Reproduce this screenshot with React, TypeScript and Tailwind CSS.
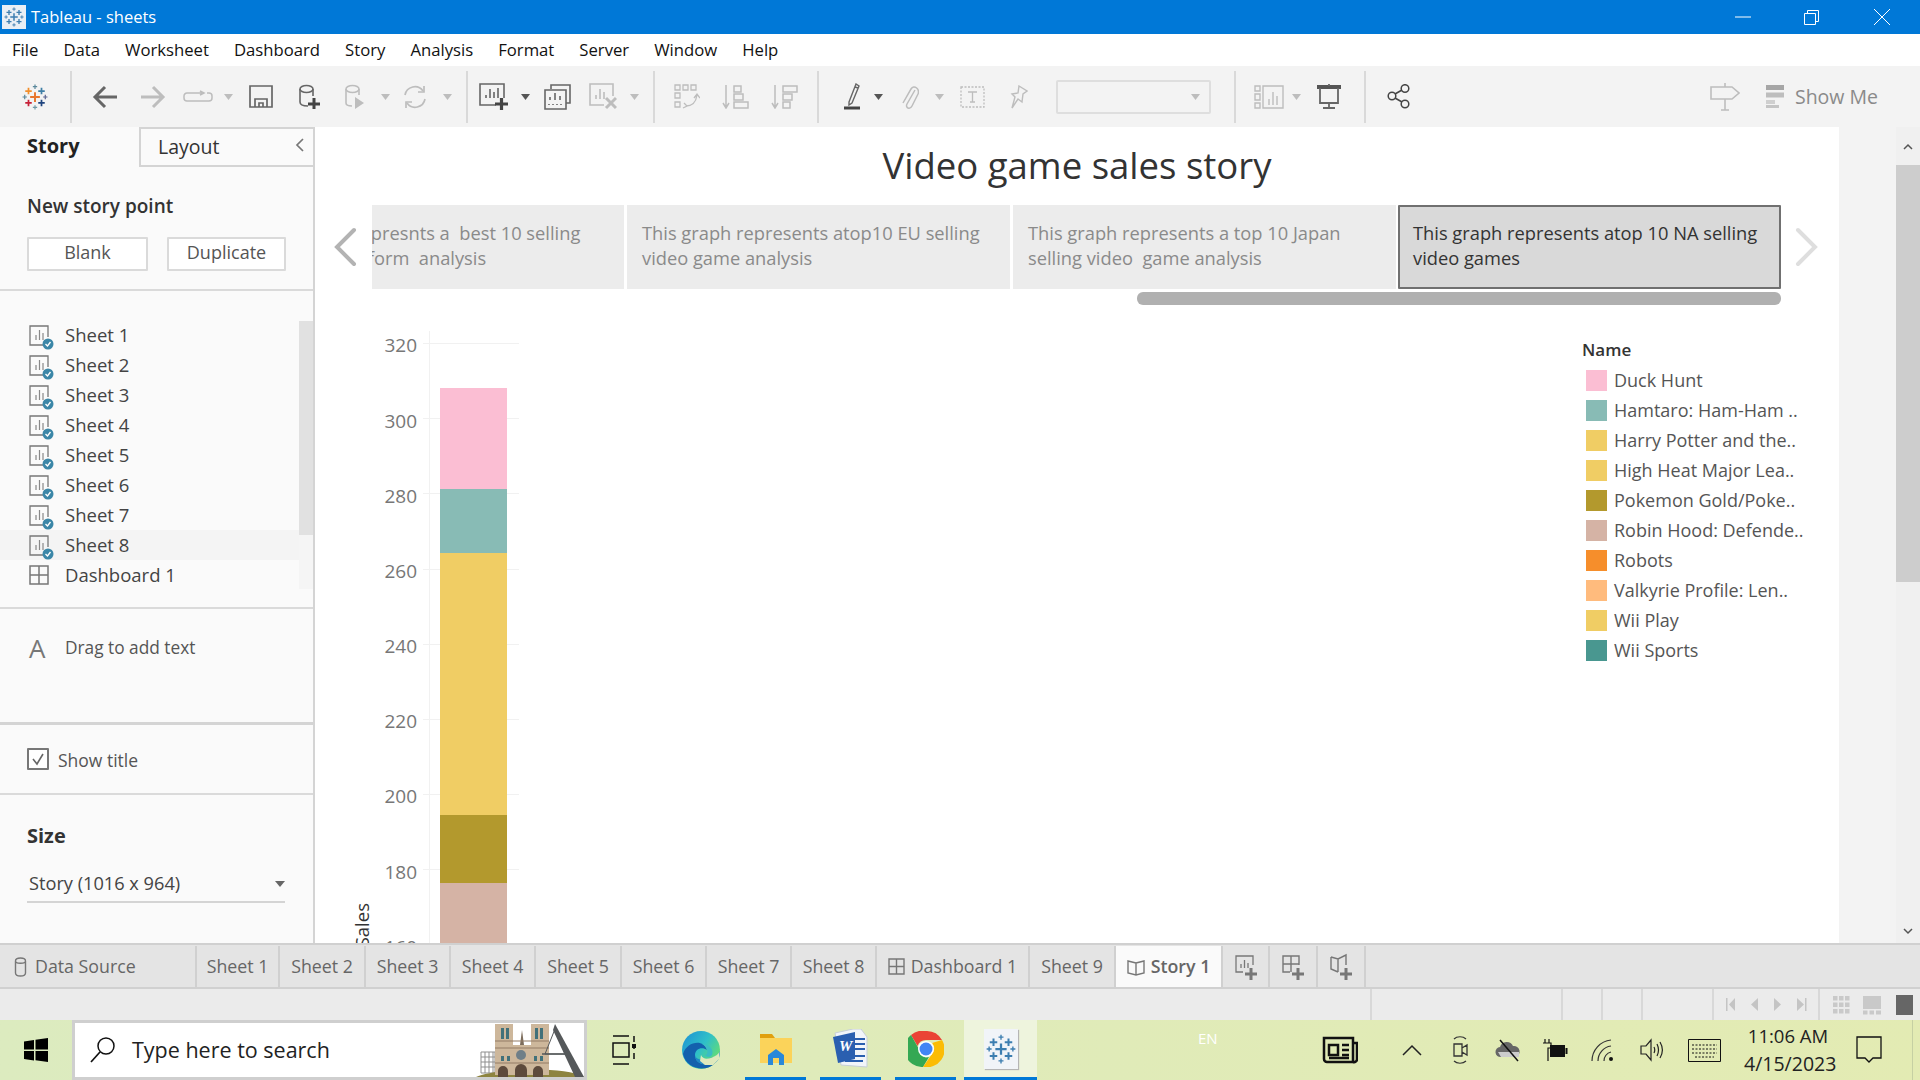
import type { ReactNode } from "react";

const legend = [
  ["Duck Hunt", "bg-[#fbbed3]"],
  ["Hamtaro: Ham-Ham ..", "bg-[#88bbb5]"],
  ["Harry Potter and the..", "bg-[#f0cd64]"],
  ["High Heat Major Lea..", "bg-[#f0cd64]"],
  ["Pokemon Gold/Poke..", "bg-[#b3992d]"],
  ["Robin Hood: Defende..", "bg-[#d5b3a5]"],
  ["Robots", "bg-[#f68e2b]"],
  ["Valkyrie Profile: Len..", "bg-[#ffbb7d]"],
  ["Wii Play", "bg-[#f0cd64]"],
  ["Wii Sports", "bg-[#499790]"],
];

const ticks = ["320", "300", "280", "260", "240", "220", "200", "180", "160"];
const sheets = ["Sheet 1", "Sheet 2", "Sheet 3", "Sheet 4", "Sheet 5", "Sheet 6", "Sheet 7", "Sheet 8"];

function Plus({ x, y, r, c, w = 1.6 }: { x: number; y: number; r: number; c: string; w?: number }) {
  return <path d={`M${x - r} ${y}H${x + r}M${x} ${y - r}V${y + r}`} stroke={c} strokeWidth={w} fill="none" />;
}

function TableauMark({ size, mono }: { size: number; mono?: string }) {
  const c = (v: string) => mono ?? v;
  return (
    <svg width={size} height={size} viewBox="0 0 24 24">
      <Plus x={12} y={12} r={4.5} c={c("#e8762d")} w={1.8} />
      <Plus x={6} y={6.5} r={3} c={c("#f28e2b")} />
      <Plus x={18} y={6.5} r={3} c={c("#3f7fa6")} />
      <Plus x={6} y={17.5} r={3} c={c("#c72037")} />
      <Plus x={18} y={17.5} r={3} c={c("#1f447e")} />
      <Plus x={12} y={2.5} r={2} c={c("#59879b")} w={1.1} />
      <Plus x={12} y={21.5} r={2} c={c("#7099a6")} w={1.1} />
      <Plus x={2.5} y={12} r={2} c={c("#5b879b")} w={1.1} />
      <Plus x={21.5} y={12} r={2} c={c("#5b6591")} w={1.1} />
    </svg>
  );
}

function Dd({ className, dark }: { className?: string; dark?: boolean }) {
  return (
    <svg width="9" height="6" viewBox="0 0 9 6" className={className}>
      <path d="M0 0H9L4.5 6Z" fill={dark ? "#555" : "#bdbdbd"} />
    </svg>
  );
}

function Ico({ w, h, className, children }: { w: number; h: number; className?: string; children: ReactNode }) {
  return (
    <svg width={w} height={h} viewBox={`0 0 ${w} ${h}`} fill="none" className={className}>
      {children}
    </svg>
  );
}

function Toolbar() {
  const dark = "#666";
  const light = "#bdbdbd";
  return (
    <div className="flex h-[61px] items-center bg-[#f3f3f3]">
      <div className="flex h-[52px] w-[72px] items-center justify-center border-r-2 border-[#d9d9d9]">
        <TableauMark size={26} />
      </div>
      <Ico w={26} h={24} className="ml-[20px]">
        <path d="M25 12H3M13 2L3 12L13 22" stroke={dark} strokeWidth="3" />
      </Ico>
      <Ico w={26} h={24} className="ml-[22px]">
        <path d="M1 12H23M13 2L23 12L13 22" stroke={light} strokeWidth="3" />
      </Ico>
      <Ico w={30} h={14} className="ml-[17px]">
        <path d="M20 3H4a3 3 0 0 0-3 3v2a3 3 0 0 0 3 3h22a3 3 0 0 0 3-3V6a3 3 0 0 0-3-3h-2M17 1l4 2-4 2" stroke={light} strokeWidth="1.5" />
      </Ico>
      <Dd className="ml-[11px]" />
      <Ico w={24} h={23} className="ml-[16px]">
        <path d="M1 1H23V22H1ZM6 22V14H18V22M10 22V18H14V22" stroke={dark} strokeWidth="1.7" />
      </Ico>
      <Ico w={23} h={25} className="ml-[25px]">
        <path d="M2 5V18C2 21 6 22 10 22M15 5V12" stroke={dark} strokeWidth="1.6" />
        <ellipse cx="8.5" cy="5" rx="6.5" ry="3.5" stroke={dark} strokeWidth="1.6" />
        <path d="M10 20H22M16 14V25" stroke="#444" strokeWidth="3" />
      </Ico>
      <Ico w={21} h={25} className="ml-[23px]">
        <path d="M2 5V19C2 21 5 22 8 22M15 5V11" stroke={light} strokeWidth="1.6" />
        <ellipse cx="8.5" cy="5" rx="6.5" ry="3.5" stroke={light} strokeWidth="1.6" />
        <path d="M11 13L20 19L11 25Z" fill={light} />
      </Ico>
      <Dd className="ml-[16px]" />
      <Ico w={26} h={26} className="ml-[12px]">
        <path d="M3 11A10 10 0 0 1 21 7M23 15A10 10 0 0 1 5 19" stroke={light} strokeWidth="1.7" />
        <path d="M22 2V8H16M4 24V18H10" stroke={light} strokeWidth="1.7" />
      </Ico>
      <Dd className="ml-[15px]" />
      <div className="ml-[14px] h-[52px] w-[2px] bg-[#d9d9d9]" />
      <Ico w={29} h={27} className="ml-[11px]">
        <path d="M17 22H1V1H25V15M7 15V12M11 15V6M15 15V9M19 15V5" stroke={dark} strokeWidth="1.6" />
        <path d="M16 21H29M22.500 15V27" stroke="#444" strokeWidth="3.200" />
      </Ico>
      <Dd dark className="ml-[13px]" />
      <Ico w={27} h={26} className="ml-[14px]">
        <path d="M7 5V1H26V19H22M1 6H22V25H1ZM6 16V13M11 16V9M16 16V12M5 21V20M9 21V20M13 21V20M17 21V20" stroke={dark} strokeWidth="1.600" />
      </Ico>
      <Ico w={28} h={27} className="ml-[18px]">
        <path d="M15 22H1V1H24V13M7 16V12M11 16V6M15 16V9" stroke={light} strokeWidth="1.6" />
        <path d="M17 15L27 25M27 15L17 25" stroke={light} strokeWidth="3" />
      </Ico>
      <Dd className="ml-[13px]" />
      <div className="ml-[14px] h-[52px] w-[2px] bg-[#d9d9d9]" />
      <Ico w={26} h={25} className="ml-[19px]">
        <path d="M1 1H6V6H1ZM9 1H14V6H9ZM17 1H22V6H17ZM1 9H6V14H1ZM1 18H6V23H1ZM12 22C18 22 22 18 23 11M20 14L23 10L26 14M9 24L13 22L10 19" stroke={light} strokeWidth="1.300" />
      </Ico>
      <Ico w={27} h={25} className="ml-[22px]">
        <path d="M4 1V23M1 19L4 24L7 19M12 2H19V8H12ZM12 10H21V16H12ZM12 18H26V24H12Z" stroke={light} strokeWidth="1.500" />
      </Ico>
      <Ico w={27} h={25} className="ml-[22px]">
        <path d="M4 1V23M1 19L4 24L7 19M12 2H26V8H12ZM12 10H21V16H12ZM12 18H19V24H12Z" stroke={light} strokeWidth="1.500" />
      </Ico>
      <div className="ml-[19px] h-[52px] w-[2px] bg-[#d9d9d9]" />
      <Ico w={18} h={27} className="ml-[25px]">
        <path d="M5 19L12 1L15 3L8 20L5 22ZM11 4L14 5" stroke={dark} strokeWidth="1.400" />
        <path d="M0 25H16" stroke="#444" strokeWidth="3" />
      </Ico>
      <Dd dark className="ml-[12px]" />
      <Ico w={18} h={26} className="ml-[18px]">
        <path d="M14 6L6 20C4 24 9 26 11 22L17 10C19 5 13 0 10 5L2 19" stroke={light} strokeWidth="1.500" />
      </Ico>
      <Dd className="ml-[16px]" />
      <Ico w={25} h={22} className="ml-[16px]">
        <path d="M1 1H24V21H1Z" stroke={light} strokeWidth="1.300" strokeDasharray="2 1.500" />
        <path d="M8 6H17M12.500 6V16M10 16H15" stroke={light} strokeWidth="1.300" />
      </Ico>
      <Ico w={18} h={24} className="ml-[25px]">
        <path d="M9 1L17 6L13 9L12 17L8 14L2 23L5 12L2 9L8 8Z" stroke={light} strokeWidth="1.400" />
      </Ico>
      <div className="ml-[28px] flex h-[34px] w-[155px] items-center justify-end rounded-[2px] border-2 border-[#dedede] pr-[9px]">
        <Dd />
      </div>
      <div className="ml-[23px] h-[52px] w-[2px] bg-[#d9d9d9]" />
      <Ico w={30} h={24} className="ml-[18px]">
        <path d="M1 1H6V6H1ZM1 9H6V15H1ZM1 18H6V23H1ZM9 1H29V23H9ZM15 20V14M19 20V7M23 20V11" stroke={light} strokeWidth="1.400" />
      </Ico>
      <Dd className="ml-[8px]" />
      <Ico w={26} h={25} className="ml-[15px]">
        <path d="M1 3H25" stroke="#555" strokeWidth="4" />
        <path d="M4 4V19H22V4M13 0V2M13 19V24M7 24H19" stroke={dark} strokeWidth="1.800" />
      </Ico>
      <div className="ml-[22px] h-[52px] w-[2px] bg-[#d9d9d9]" />
      <Ico w={24} h={25} className="ml-[21px]">
        <circle cx="5" cy="12" r="3.800" stroke="#444" strokeWidth="1.500" />
        <circle cx="18" cy="4.500" r="3.800" stroke="#444" strokeWidth="1.500" />
        <circle cx="18" cy="20" r="3.800" stroke="#444" strokeWidth="1.500" />
        <path d="M8 10L15 6M8 14L15 18" stroke="#444" strokeWidth="1.500" />
      </Ico>
      <div className="flex-1" />
      <Ico w={30} h={28} className="mr-[26px]">
        <path d="M1 4H22L29 10L22 16H1ZM15 0V4M15 16V27M11 27H19" stroke={light} strokeWidth="1.600" />
      </Ico>
      <div className="mr-[42px] flex items-center gap-[11px]">
        <Ico w={18} h={23}>
          <path d="M0 0H18V5H0Z" fill="#a6a6a6" />
          <path d="M0 7.500H18V12.500H0Z" fill="#bdbdbd" />
          <path d="M0 15H9V19H0Z" fill="#cfcfcf" />
          <path d="M0 20H13V23H0Z" fill="#c4c4c4" />
        </Ico>
        <span className="text-[19.5px] text-[#8a8a8a]">Show Me</span>
      </div>
    </div>
  );
}

function SheetIcon() {
  return (
    <svg width="26" height="25" viewBox="0 0 26 25" fill="none" className="mt-[5px] shrink-0">
      <path d="M14 20H1V1H19V12" stroke="#777" strokeWidth="1.300" />
      <path d="M7 15V10M10.500 15V5M14 15V8" stroke="#888" strokeWidth="1.200" />
      <circle cx="19" cy="19" r="5.500" fill="#3b87a8" />
      <path d="M16.500 19L18.500 21L21.500 17" stroke="white" strokeWidth="1.300" />
    </svg>
  );
}

function Sidebar() {
  return (
    <aside className="flex w-[315px] shrink-0 flex-col border-r-2 border-[#d4d4d4] bg-[#fafafa] text-[#444]">
      <div className="flex h-[40px] shrink-0">
        <div className="w-[139px] pl-[27px] pt-[3px] text-[20px] font-bold leading-[32px] text-[#222]">Story</div>
        <div className="flex flex-1 items-center justify-between border-y-2 border-l-2 border-[#d4d4d4] bg-[#fafafa] pl-[17px] pr-[8px] text-[19.5px] text-[#333]">
          <span>Layout</span>
          <svg width="10" height="16" viewBox="0 0 10 16" fill="none" className="-mt-[4px]">
            <path d="M8 2L2 8L8 14" stroke="#777" strokeWidth="1.700" />
          </svg>
        </div>
      </div>
      <div className="h-[124px] shrink-0 border-b-2 border-[#dadada] pl-[27px] pt-[25px]">
        <div className="text-[19px] font-semibold leading-[28px] text-[#333]">New story point</div>
        <div className="mt-[17px] flex gap-[19px]">
          <div className="flex h-[34px] w-[121px] items-center justify-center rounded-[1px] border-2 border-[#dadada] bg-white pb-[3px] text-[18px] text-[#555]">Blank</div>
          <div className="flex h-[34px] w-[119px] items-center justify-center rounded-[1px] border-2 border-[#dadada] bg-white pb-[3px] text-[18px] text-[#555]">Duplicate</div>
        </div>
      </div>
      <div className="relative h-[318px] shrink-0 border-b-2 border-[#dadada] pt-[29px]">
        {sheets.map((s) => (
          <div key={s} className={`flex h-[30px] items-center pl-[29px] text-[18.5px] ${s === "Sheet 8" ? "bg-[#f4f4f4]" : ""}`}>
            <SheetIcon />
            <span className="ml-[10px]">{s}</span>
          </div>
        ))}
        <div className="flex h-[30px] items-center pl-[29px] text-[18.5px]">
          <svg width="20" height="20" viewBox="0 0 20 20" fill="none">
            <path d="M1 1H19V19H1ZM10 1V19M1 10H19" stroke="#777" strokeWidth="1.500" />
          </svg>
          <span className="ml-[16px]">Dashboard 1</span>
        </div>
        <div className="absolute right-0 top-[30px] h-[268px] w-[14px] bg-[#f5f5f5]">
          <div className="h-[214px] bg-[#e1e1e1]" />
        </div>
      </div>
      <div className="flex h-[116px] shrink-0 items-start border-b-[3px] border-[#d4d4d4] pl-[29px] pt-[24px]">
        <span className="w-[36px] text-[26px] leading-[30px] text-[#777]">A</span>
        <span className="pt-[1px] text-[17.300px] leading-[28px] text-[#555]">Drag to add text</span>
      </div>
      <div className="flex h-[70px] shrink-0 items-center border-b-2 border-[#dadada] pl-[27px]">
        <div className="flex h-[22px] w-[22px] items-center justify-center rounded-[1px] border-2 border-[#777] bg-white">
          <svg width="14" height="14" viewBox="0 0 14 14" fill="none">
            <path d="M2 7L6 12L12 2" stroke="#666" strokeWidth="1.600" />
          </svg>
        </div>
        <span className="ml-[9px] pt-[2px] text-[17.500px] text-[#555]">Show title</span>
      </div>
      <div className="flex-1 pl-[27px] pr-[28px] pt-[27px]">
        <div className="text-[20px] font-bold leading-[28px] text-[#333]">Size</div>
        <div className="mt-[16px] flex h-[37px] items-center justify-between border-b-2 border-[#d4d4d4] pl-[2px] text-[18.200px] text-[#444]">
          <span>Story (1016 x 964)</span>
          <svg width="10" height="6" viewBox="0 0 10 6">
            <path d="M0 0H10L5 6Z" fill="#666" />
          </svg>
        </div>
      </div>
    </aside>
  );
}

function StoryPoint({ children, active }: { children: ReactNode; active?: boolean }) {
  return (
    <div
      className={
        active
          ? "-ml-[1px] h-[84px] w-[383px] shrink-0 rounded-[1px] border-2 border-[#707070] bg-[#d9d9d9] px-[13px] pt-[13px] text-[18.300px] leading-[25px] text-[#333]"
          : "h-[84px] w-[383px] shrink-0 bg-[#ececec] px-[15px] pt-[15px] text-[18.300px] leading-[25px] text-[#8a8a8a]"
      }
    >
      {children}
    </div>
  );
}

function Chart() {
  return (
    <div className="flex min-h-0 flex-1 overflow-hidden">
      <div className="flex w-[58px] shrink-0 items-end justify-end">
        <span className="-mb-[4px] rotate-180 text-[18.500px] leading-[22px] text-[#333] [writing-mode:vertical-rl]">Sales</span>
      </div>
      <div className="w-[50px] shrink-0 pt-[3px] text-right text-[19px] text-[#777]">
        {ticks.map((t) => (
          <div key={t} className="flex h-[75.2px] items-center justify-end pr-[6px]">{t}</div>
        ))}
      </div>
      <div className="relative w-[96px] shrink-0 pt-[1px]">
        {ticks.map((t) => (
          <div key={t} className="flex h-[75.2px] items-center">
            <div className="h-[1px] w-full bg-[#f1f1f1]" />
          </div>
        ))}
        <div className="absolute bottom-0 left-[6px] top-[26px] w-[1px] bg-[#f1f1f1]" />
        <div className="absolute left-[17px] top-[83px] flex w-[67px] flex-col">
          <div className="h-[101px] bg-[#fbbed3]" />
          <div className="h-[64px] bg-[#88bbb5]" />
          <div className="h-[262px] bg-[#f0cd64]" />
          <div className="h-[68px] bg-[#b3992d]" />
          <div className="h-[70px] bg-[#d5b3a5]" />
        </div>
      </div>
      <div className="flex-1" />
      <div className="w-[257px] shrink-0 pt-[33px]">
        <div className="h-[27px] text-[17px] font-semibold leading-[24px] text-[#333]">Name</div>
        {legend.map(([name, color]) => (
          <div key={name} className="flex h-[30px] items-center pl-[4px]">
            <div className={`h-[21px] w-[21px] shrink-0 ${color}`} />
            <span className="ml-[7px] whitespace-nowrap text-[18px] text-[#555]">{name}</span>
          </div>
        ))}
      </div>
    </div>
  );
}

function Main() {
  return (
    <main className="flex min-w-0 flex-1 flex-col bg-white">
      <div className="h-[78px] shrink-0 pt-[13px] text-center text-[36.500px] leading-[50px] text-[#333]">Video game sales story</div>
      <div className="flex h-[84px] shrink-0 items-center">
        <svg width="26" height="40" viewBox="0 0 26 40" fill="none" className="ml-[17px] shrink-0">
          <path d="M22 3L5 20L22 37" stroke="#b3b3b3" strokeWidth="4" strokeLinecap="round" />
        </svg>
        <div className="ml-[14px] flex h-[84px] w-[1409px] shrink-0 justify-end gap-[3px] overflow-hidden">
          <StoryPoint>
            <span className="ml-[3px]">This graph represnts a&nbsp; best 10 selling</span>
            <br />
            <span className="ml-[7px]">sales by platform&nbsp; analysis</span>
          </StoryPoint>
          <StoryPoint>This graph represents atop10 EU selling<br />video game analysis</StoryPoint>
          <StoryPoint>This graph represents a top 10 Japan<br />selling video&nbsp; game analysis</StoryPoint>
          <StoryPoint active>This graph represents atop 10 NA selling<br />video games</StoryPoint>
        </div>
        <svg width="26" height="40" viewBox="0 0 26 40" fill="none" className="ml-[13px] shrink-0">
          <path d="M4 3L21 20L4 37" stroke="#dedede" strokeWidth="4" strokeLinecap="round" />
        </svg>
      </div>
      <div className="flex h-[16px] shrink-0 items-end pl-[822px]">
        <div className="h-[13px] w-[644px] rounded-[6px] bg-[#b0b0b0]" />
      </div>
      <Chart />
    </main>
  );
}

function Scrollbar() {
  return (
    <div className="flex w-[24px] shrink-0 flex-col bg-[#f0f0f0]">
      <div className="flex h-[38px] items-center justify-center">
        <svg width="10" height="7" viewBox="0 0 10 7" fill="none">
          <path d="M1 6L5 2L9 6" stroke="#555" strokeWidth="1.500" />
        </svg>
      </div>
      <div className="h-[417px] bg-[#cdcdcd]" />
      <div className="flex-1" />
      <div className="flex h-[24px] items-center justify-center">
        <svg width="10" height="7" viewBox="0 0 10 7" fill="none">
          <path d="M1 1L5 5L9 1" stroke="#555" strokeWidth="1.500" />
        </svg>
      </div>
    </div>
  );
}

function AddIcon({ children }: { children: ReactNode }) {
  return (
    <svg width="24" height="28" viewBox="0 0 24 28" fill="none">
      {children}
      <path d="M11 21H23M17 15V27" stroke="#777" strokeWidth="3" />
    </svg>
  );
}

function Tab({ className, children }: { className: string; children: ReactNode }) {
  return <div className={`flex h-[41px] shrink-0 items-center justify-center gap-[6px] border-r-2 border-[#d0d0d0] ${className}`}>{children}</div>;
}

function TabBar() {
  return (
    <div className="flex h-[46px] shrink-0 items-start border-y-2 border-[#d0d0d0] bg-[#e4e4e4] pt-[1px] text-[17.800px] text-[#666]">
      <Tab className="w-[197px] justify-start pl-[14px]">
        <svg width="13" height="20" viewBox="0 0 13 20" fill="none">
          <path d="M1.500 4V16C1.500 20 11.500 20 11.500 16V4C11.500 0 1.500 0 1.500 4C1.500 7 11.500 7 11.500 4" stroke="#777" strokeWidth="1.400" />
        </svg>
        <span className="ml-[2px]">Data Source</span>
      </Tab>
      <Tab className="w-[83px]">Sheet 1</Tab>
      <Tab className="w-[86px]">Sheet 2</Tab>
      <Tab className="w-[85px]">Sheet 3</Tab>
      <Tab className="w-[85px]">Sheet 4</Tab>
      <Tab className="w-[86px]">Sheet 5</Tab>
      <Tab className="w-[85px]">Sheet 6</Tab>
      <Tab className="w-[85px]">Sheet 7</Tab>
      <Tab className="w-[85px]">Sheet 8</Tab>
      <Tab className="w-[153px]">
        <svg width="17" height="17" viewBox="0 0 17 17" fill="none">
          <path d="M1 1H16V16H1ZM8.500 1V16M1 8.500H16" stroke="#777" strokeWidth="1.400" />
        </svg>
        Dashboard 1
      </Tab>
      <Tab className="w-[86px]">Sheet 9</Tab>
      <Tab className="w-[107px] bg-[#fafafa] font-semibold">
        <svg width="18" height="18" viewBox="0 0 18 18" fill="none">
          <path d="M1 3L9 5L17 3V15L9 17L1 15ZM9 5V17" stroke="#777" strokeWidth="1.400" />
        </svg>
        Story 1
      </Tab>
      <Tab className="w-[47px]">
        <AddIcon><path d="M9 19H2V3H19V12M7 15V11M10.500 15V7M14 15V10" stroke="#777" strokeWidth="1.300" /></AddIcon>
      </Tab>
      <Tab className="w-[48px]">
        <AddIcon><path d="M9 19H2V3H18V12M10 3V19M2 11H18" stroke="#777" strokeWidth="1.400" /></AddIcon>
      </Tab>
      <Tab className="w-[48px]">
        <AddIcon><path d="M2 4L9 6L17 2V12M9 6V19M2 4V16L9 19" stroke="#777" strokeWidth="1.400" /></AddIcon>
      </Tab>
    </div>
  );
}

function StatusBar() {
  const cell = "h-full border-l-2 border-[#d8d8d8]";
  const slot = "flex w-[24px] justify-center";
  return (
    <div className="flex h-[31px] shrink-0 items-center bg-[#ebebeb]">
      <div className="flex-1" />
      <div className={`${cell} w-[191px]`} />
      <div className={`${cell} w-[40px]`} />
      <div className={`${cell} w-[40px]`} />
      <div className={`${cell} w-[71px]`} />
      <div className={`${cell} flex w-[106px] items-center pl-[4px]`}>
        <div className={slot}><svg width="11" height="13" viewBox="0 0 11 13"><path d="M1 0H2.500V13H1ZM10 0V13L4 6.500Z" fill="#c4c4c4" /></svg></div>
        <div className={slot}><svg width="8" height="13" viewBox="0 0 8 13"><path d="M8 0V13L1 6.500Z" fill="#c4c4c4" /></svg></div>
        <div className={slot}><svg width="8" height="13" viewBox="0 0 8 13"><path d="M0 0V13L7 6.500Z" fill="#c4c4c4" /></svg></div>
        <div className={slot}><svg width="11" height="13" viewBox="0 0 11 13"><path d="M0 0V13L7 6.500ZM8 0H9.500V13H8Z" fill="#c4c4c4" /></svg></div>
      </div>
      <div className={`${cell} flex w-[102px] items-center pl-[13px]`}>
        <svg width="17" height="20" viewBox="0 0 17 20" fill="#c9c9c9">
          <path d="M0 1H4.500V5.500H0ZM6 1H10.500V5.500H6ZM12 1H16.500V5.500H12ZM0 7.500H4.500V12H0ZM6 7.500H10.500V12H6ZM12 7.500H16.500V12H12ZM0 14H4.500V18.500H0ZM6 14H10.500V18.500H6ZM12 14H16.500V18.500H12Z" />
        </svg>
        <svg width="18" height="20" viewBox="0 0 18 20" fill="#c9c9c9" className="ml-[13px]">
          <path d="M0 1H18V14H0ZM0 15.500H4.500V19.500H0ZM6.500 15.500H11V19.500H6.500ZM13 15.500H18V19.500H13Z" />
        </svg>
        <div className="ml-[15px] h-[20px] w-[17px] bg-[#666]" />
      </div>
    </div>
  );
}

function NotreDame() {
  return (
    <svg width="112" height="54" viewBox="0 0 112 54" className="shrink-0">
      <path d="M9 29H23V50H9ZM13 29V50M17 29V50M21 29V50M9 34H23M9 39H23M9 44H23" stroke="#8f8f8f" strokeWidth="1" fill="none" />
      <path d="M4 54C20 46 92 42 112 54Z" fill="#8d8440" />
      <path d="M23 1H41V22H59V1H77V52H23Z" fill="#cdb79b" />
      <path d="M50 7L52 22H48Z" fill="#7d6d5c" />
      <path d="M29 5H32V16H29ZM34 5H37V16H34ZM63 5H66V16H63ZM68 5H71V16H68Z" fill="#41717a" />
      <path d="M23 18H77M23 25H77M23 40H77" stroke="#937d66" strokeWidth="1.200" />
      <circle cx="49" cy="32" r="5" fill="#6f7f88" />
      <path d="M29 33H32V38H29ZM35 33H38V38H35ZM62 33H65V38H62ZM68 33H71V38H68Z" fill="#41717a" />
      <path d="M26 54V48A5 5 0 0 1 36 48V54ZM43 54V47A6 6 0 0 1 55 47V54ZM61 54V48A5 5 0 0 1 71 48V54Z" fill="#5d4a3c" />
      <path d="M83 1L112 54H103L81 7Z" fill="#55585a" />
      <path d="M83 6L73 31H93Z" fill="none" stroke="#55585a" strokeWidth="1" />
      <path d="M70 31H96" stroke="#55585a" strokeWidth="1.500" />
    </svg>
  );
}

function Taskbar() {
  return (
    <div className="flex h-[60px] shrink-0 items-center bg-gradient-to-r from-[#dcebbf] to-[#e3ebb3] text-[#1a1a1a]">
      <div className="flex w-[72px] shrink-0 justify-center">
        <svg width="24" height="24" viewBox="0 0 24 24" fill="#000">
          <path d="M0 3.500L10 2V11.500H0ZM11.500 1.800L24 0V11.500H11.500ZM0 13H10V22.500L0 21ZM11.500 13H24V24L11.500 22.200Z" />
        </svg>
      </div>
      <div className="flex h-[60px] w-[515px] shrink-0 items-center border-[3px] border-[#cfcfcf] bg-white pl-[15px]">
        <svg width="26" height="28" viewBox="0 0 26 28" fill="none" className="shrink-0">
          <circle cx="16" cy="10" r="8" stroke="#111" strokeWidth="1.500" />
          <path d="M10 16L1 26" stroke="#111" strokeWidth="1.700" />
        </svg>
        <span className="ml-[16px] pt-[1px] text-[21.500px] text-[#222]">Type here to search</span>
        <div className="flex-1" />
        <NotreDame />
      </div>
      <svg width="24" height="30" viewBox="0 0 24 30" fill="none" className="ml-[25px] shrink-0">
        <path d="M1 1H17M1 29H17M1 8H17V22H1ZM22 1V7M22 11V14M22 18V24" stroke="#111" strokeWidth="1.500" />
        <rect x="20" y="9" width="4" height="4" fill="#111" />
      </svg>
      <div className="ml-[34px] flex h-[60px] w-[61px] shrink-0 items-center justify-center">
        <svg width="38" height="38" viewBox="0 0 38 38">
          <defs>
            <linearGradient id="edgeA" x1="0" y1="0" x2="1" y2="0.700">
              <stop offset="0" stopColor="#1b8fd6" />
              <stop offset="0.550" stopColor="#2fc0c8" />
              <stop offset="1" stopColor="#6ae06a" />
            </linearGradient>
          </defs>
          <circle cx="19" cy="19" r="19" fill="url(#edgeA)" />
          <path d="M1 23C4 38 24 42 33 32C24 36 13 33 13 24C13 18 20 15 25 19C22 8 5 10 1 23Z" fill="#1360ad" />
          <path d="M25 19C24 16 22 14 20 13C28 13 32 19 30 24C28 27 24 26 23 24C25 24 26 21 25 19Z" fill="#3bbcc4" />
          <path d="M38 20C38 27 36 30 33 32C24 36 13 33 13 24C13 28 20 30 26 28C32 26 36 25 38 20Z" fill="#1f86c8" />
          <path d="M19 24C21 29 27 28 31 26C34 25 36 23 37.500 21L37 28L31 34L23 34L18 30Z" fill="#dfe9bc" />
        </svg>
      </div>
      <div className="ml-[14px] flex h-[60px] w-[61px] shrink-0 items-center justify-center border-b-[3px] border-[#0078d7]">
        <svg width="34" height="36" viewBox="0 0 34 36">
          <path d="M1 3H13L16 7H1Z" fill="#e0a00f" />
          <path d="M1 7H33V32H1Z" fill="#fbd35a" />
          <path d="M9 34V24L17 18L25 24V34H20V27H14V34Z" fill="#2b88d8" />
        </svg>
      </div>
      <div className="ml-[14px] flex h-[60px] w-[61px] shrink-0 items-center justify-center border-b-[3px] border-[#0078d7]">
        <svg width="36" height="40" viewBox="0 0 36 40">
          <path d="M2 4L20 0H28L34 8V38L8 36Z" fill="#f2f5fa" stroke="#c7cfd8" />
          <path d="M0 8L22 3V30L5 34Z" fill="#2a5fb0" />
          <text x="6" y="22" fill="#ffffff" fontSize="15" fontWeight="700" fontStyle="italic" fontFamily="Liberation Serif, serif">W</text>
          <path d="M22 10H32M22 15H32M22 20H32M12 27H32M12 32H30" stroke="#2a5fb0" strokeWidth="2" />
        </svg>
      </div>
      <div className="ml-[14px] flex h-[60px] w-[61px] shrink-0 items-center justify-center border-b-[3px] border-[#0078d7]">
        <svg width="36" height="36" viewBox="0 0 36 36">
          <path d="M18 0A18 18 0 0 1 34 9H18A9 9 0 0 0 9.500 15L3 4A18 18 0 0 1 18 0Z" fill="#ea4335" />
          <path d="M3 4L11.500 19A7 7 0 0 0 21 26L15 36A18 18 0 0 1 3 4Z" fill="#34a853" />
          <path d="M34 9A18 18 0 0 1 15 36L24 23A8 8 0 0 0 24 12Z" fill="#fbbc05" />
          <circle cx="18" cy="18" r="8" fill="#ffffff" />
          <circle cx="18" cy="18" r="6.500" fill="#4285f4" />
        </svg>
      </div>
      <div className="ml-[8px] flex h-[60px] w-[73px] shrink-0 items-center justify-center border-b-[3px] border-[#0078d7] bg-[#eef4dd]">
        <div className="flex h-[40px] w-[34px] items-center justify-center bg-[#f1f4f8] shadow-[1px_1px_1px_#b5b5b5]">
          <TableauMark size={30} mono="#3d7eb0" />
        </div>
      </div>
      <div className="flex-1 self-start pl-[161px] pt-[7px] text-[15px] text-white">EN</div>
      <svg width="36" height="28" viewBox="0 0 36 28" fill="none" className="mr-[44px] shrink-0">
        <path d="M2 2H31V26H5A3 3 0 0 1 2 23ZM31 7H35V23A3 3 0 0 1 31 26M7 9H16V19H7ZM20 9H27M20 14H27M20 19H27M7 22H27" stroke="#111" strokeWidth="2.500" />
      </svg>
      <svg width="20" height="12" viewBox="0 0 20 12" fill="none" className="mr-[30px] shrink-0">
        <path d="M1 11L10 2L19 11" stroke="#222" strokeWidth="1.500" />
      </svg>
      <svg width="16" height="28" viewBox="0 0 16 28" fill="none" className="mr-[27px] shrink-0">
        <path d="M2 3C5 0 11 0 14 3M2 25C5 28 11 28 14 25" stroke="#333" strokeWidth="1.200" />
        <path d="M2 8H10V20H2ZM10 12L15 9V19L10 16" stroke="#333" strokeWidth="1.300" />
      </svg>
      <svg width="26" height="24" viewBox="0 0 26 24" fill="none" className="mr-[22px] shrink-0">
        <path d="M6 19A5 5 0 0 1 5 9A7 7 0 0 1 18 8A5.500 5.500 0 0 1 20 19Z" fill="#666" />
        <path d="M3 14H24V19H6Z" fill="#ccc" />
        <path d="M5 2L23 23" stroke="#111" strokeWidth="1.500" />
      </svg>
      <svg width="25" height="22" viewBox="0 0 25 22" className="mr-[23px] shrink-0">
        <path d="M2 0V4M6 0V4M0 4H8V9H5V22" stroke="#111" strokeWidth="1.200" fill="none" />
        <rect x="7" y="6" width="15" height="12" fill="#111" />
        <rect x="22.500" y="9" width="2" height="6" fill="#111" />
      </svg>
      <svg width="26" height="24" viewBox="0 0 26 24" fill="none" className="mr-[23px] shrink-0">
        <path d="M1 23A21 21 0 0 1 20 2M7 23A15 15 0 0 1 20 8M13 23A9 9 0 0 1 20 14" stroke="#333" strokeWidth="1.200" />
        <circle cx="20" cy="21" r="2" fill="#111" />
      </svg>
      <svg width="24" height="24" viewBox="0 0 24 24" fill="none" className="mr-[24px] shrink-0">
        <path d="M1 8H6L11 2V22L6 16H1ZM14 9C15 11 15 13 14 15M17 6C19 10 19 14 17 18M20 4C23 9 23 15 20 20" stroke="#222" strokeWidth="1.200" />
      </svg>
      <svg width="33" height="23" viewBox="0 0 33 23" fill="none" className="mr-[23px] shrink-0">
        <path d="M.5 .5H32.500V22.500H.5Z" stroke="#111" />
        <path d="M4 6H29M4 10H29M4 14H29M7 18H26" stroke="#111" strokeWidth="1" strokeDasharray="2 1.500" />
      </svg>
      <div className="w-[88px] shrink-0 whitespace-nowrap text-center leading-[28px] text-[#222]">
        <div className="text-[18.500px]">11:06 AM</div>
        <div className="text-[19.500px]">4/15/2023</div>
      </div>
      <svg width="26" height="28" viewBox="0 0 26 28" fill="none" className="ml-[24px] mr-[30px] shrink-0">
        <path d="M1 1H25V22H17L13 26L9 22H1Z" stroke="#111" strokeWidth="1.300" />
      </svg>
      <div className="mr-[7px] h-[60px] w-[1px] shrink-0 bg-[#c6d0a3]" />
    </div>
  );
}

export default function App() {
  return (
    <div className="flex h-[1080px] w-[1920px] flex-col overflow-hidden bg-white font-['Open_Sans','Noto_Sans',sans-serif]">
      <div className="flex h-[34px] shrink-0 items-center bg-[#0078d7] text-white">
        <div className="ml-[2px] flex h-[24px] w-[24px] items-center justify-center bg-[#e9eff5]">
          <TableauMark size={20} mono="#3d7eb0" />
        </div>
        <span className="ml-[5px] text-[16.500px]">Tableau - sheets</span>
        <div className="flex-1" />
        <svg width="16" height="2" viewBox="0 0 16 2" className="mr-[53px]"><path d="M0 1H16" stroke="#fff" /></svg>
        <svg width="15" height="15" viewBox="0 0 15 15" fill="none" className="mr-[55px]"><path d="M.5 3.500H11.500V14.500H.5ZM3.500 3.500V.5H14.500V11.500H11.500" stroke="#fff" /></svg>
        <svg width="16" height="16" viewBox="0 0 16 16" className="mr-[30px]"><path d="M0 0L16 16M16 0L0 16" stroke="#fff" /></svg>
      </div>
      <div className="flex h-[32px] shrink-0 items-center gap-[25px] bg-white pl-[12px] text-[16.700px] text-[#111]">
        {["File", "Data", "Worksheet", "Dashboard", "Story", "Analysis", "Format", "Server", "Window", "Help"].map((m) => (
          <span key={m}>{m}</span>
        ))}
      </div>
      <Toolbar />
      <div className="flex h-[816px] shrink-0">
        <Sidebar />
        <Main />
        <div className="w-[57px] shrink-0 bg-[#f3f3f3]" />
        <Scrollbar />
      </div>
      <TabBar />
      <StatusBar />
      <Taskbar />
    </div>
  );
}
